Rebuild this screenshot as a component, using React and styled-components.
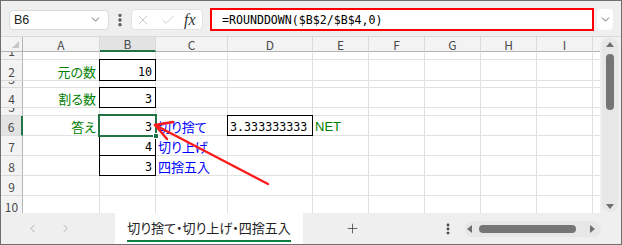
import React from 'react';
import styled, { createGlobalStyle, css } from 'styled-components';
import { ChevronDown, ChevronLeft, ChevronRight, EllipsisVertical, X, Check, Plus } from 'lucide-react';

const GlobalStyle = createGlobalStyle`
  html, body { margin: 0; padding: 0; background: #fff; }
  body { font-family: "Noto Sans CJK JP", "Noto Sans", sans-serif; }
  * { box-sizing: border-box; }
`;

const GREEN = '#217346';
const MONO = '"DejaVu Sans Mono", "Liberation Mono", monospace';
const COLS = ['A', 'B', 'C', 'D', 'E', 'F', 'G', 'H', 'I', 'J'];
const ROWS = [
  { n: 1, h: 8 },
  { n: 2, h: 21 },
  { n: 3, h: 7 },
  { n: 4, h: 20 },
  { n: 5, h: 8 },
  { n: 6, h: 20 },
  { n: 7, h: 20 },
  { n: 8, h: 20 },
  { n: 9, h: 20 },
  { n: 10, h: 20 },
];

const CELLS = {
  A2: { text: '元の数', color: '#008000', align: 'right' },
  B2: { text: '10', align: 'right', mono: true, boxed: true },
  A4: { text: '割る数', color: '#008000', align: 'right' },
  B4: { text: '3', align: 'right', mono: true, boxed: true },
  A6: { text: '答え', color: '#008000', align: 'right' },
  B6: { text: '3', align: 'right', mono: true, boxed: true, selected: true },
  C6: { text: '切り捨て', color: '#0000ff' },
  D6: { text: '3.333333333', mono: true, boxed: true },
  E6: { text: 'NET', color: '#008000', latin: true },
  B7: { text: '4', align: 'right', mono: true, boxed: true },
  C7: { text: '切り上げ', color: '#0000ff' },
  B8: { text: '3', align: 'right', mono: true, boxed: true },
  C8: { text: '四捨五入', color: '#0000ff' },
};

const Frame = styled.div`
  width: 622px;
  height: 245px;
  border: 1px solid #6f6f6f;
  background: #efefef;
  display: flex;
  flex-direction: column;
  overflow: hidden;
`;

const Toolbar = styled.div`
  height: 36px;
  flex: none;
  display: flex;
  align-items: center;
  padding: 2px 0 0 8px;
  border-bottom: 1px solid #d9d9d9;
`;

const NameBox = styled.div`
  width: 100px;
  height: 20px;
  background: #fff;
  border: 1px solid #dadada;
  border-radius: 4px;
  padding: 0 6px 0 4px;
  display: flex;
  align-items: center;
  justify-content: space-between;
  font-family: "Liberation Sans", sans-serif;
  font-size: 12.5px;
  color: #222;
`;

const Divider = styled.div`
  width: 22px;
  display: flex;
  justify-content: center;
  color: #505050;
`;

const FxBox = styled.div`
  width: 72px;
  height: 21px;
  background: #fff;
  border: 1px solid #e2e2e2;
  border-radius: 4px;
  display: flex;
  align-items: center;
  padding-left: 3px;
  gap: 9px;
  color: #c4c4c4;
`;

const Fx = styled.span`
  font-family: "Liberation Serif", serif;
  font-style: italic;
  font-size: 16px;
  color: #333;
  margin-left: -1px;
`;

const FormulaBox = styled.div`
  margin-left: 7px;
  width: 384px;
  height: 23px;
  border: 2px solid #ff0000;
  background: #fff;
  padding-left: 10px;
  display: flex;
  align-items: center;
  font-family: ${MONO};
  font-size: 11.6px;
  color: #000;
`;

const ExpandButton = styled.div`
  margin-left: 3px;
  width: 16px;
  height: 21px;
  background: #fff;
  border-radius: 4px;
  display: flex;
  align-items: center;
  justify-content: center;
  color: #555;
`;

const SheetArea = styled.div`
  flex: 1;
  display: flex;
  min-height: 0;
`;

const GridWrap = styled.div`
  position: relative;
  width: 599px;
  overflow: hidden;
  background: #fff;
`;

const Grid = styled.div`
  display: grid;
  grid-template-columns: 22px 77px 56px 72px 85px 56px 56px 56px 56px 56px 40px;
  grid-template-rows: 15px ${ROWS.map((r) => r.h + 'px').join(' ')};
`;

const HeadBase = css`
  background: #f3f3f3;
  color: #4a4a4a;
  font-size: 12px;
  display: flex;
  justify-content: center;
`;

const Corner = styled.div`
  ${HeadBase};
  position: relative;
  border-right: 1px solid #b4b4b4;
  border-bottom: 1px solid #b4b4b4;
  &::after {
    content: '';
    position: absolute;
    right: 3px;
    bottom: 3px;
    border-left: 7px solid transparent;
    border-bottom: 7px solid #c6c6c6;
  }
`;

const ColHead = styled.div`
  ${HeadBase};
  align-items: center;
  line-height: 13px;
  border-right: 1px solid #dadada;
  border-bottom: ${({ $active }) => ($active ? `2px solid ${GREEN}` : '1px solid #b4b4b4')};
  background: ${({ $active }) => ($active ? '#e3e3e3' : '#f3f3f3')};
`;

const RowHead = styled.div`
  ${HeadBase};
  overflow: hidden;
  align-items: flex-end;
  line-height: 16px;
  border-bottom: 1px solid #dadada;
  border-right: ${({ $active }) => ($active ? `2px solid ${GREEN}` : '1px solid #b4b4b4')};
  background: ${({ $active }) => ($active ? '#e3e3e3' : '#f3f3f3')};
`;

const Cell = styled.div`
  position: relative;
  display: flex;
  align-items: flex-end;
  justify-content: ${({ $align }) => ($align === 'right' ? 'flex-end' : 'flex-start')};
  padding: ${({ $align }) => ($align === 'right' ? '0 3px 0 0' : '0 0 0 2px')};
  border-right: 1px solid #e1e1e1;
  border-bottom: 1px solid #e1e1e1;
  color: ${({ $color }) => $color || '#000'};
  font-family: ${({ $mono, $latin }) =>
    $mono ? MONO : $latin ? '"Liberation Sans", sans-serif' : '"Noto Sans CJK JP", sans-serif'};
  font-size: ${({ $mono }) => ($mono ? '11.7px' : '13px')};
  font-feature-settings: "palt";
  line-height: 16px;
  white-space: nowrap;
  z-index: ${({ $selected }) => ($selected ? 2 : 'auto')};

  ${({ $boxed }) =>
    $boxed &&
    css`
      &::after {
        content: '';
        position: absolute;
        top: -1px;
        left: -1px;
        right: -1px;
        bottom: -1px;
        border: 1px solid #000;
      }
    `}

  ${({ $selected }) =>
    $selected &&
    css`
      &::before {
        content: '';
        position: absolute;
        top: -2px;
        left: -2px;
        right: -2px;
        bottom: -2px;
        border: 2px solid ${GREEN};
        z-index: 1;
      }
    `}
`;

const FillHandle = styled.span`
  position: absolute;
  right: -4px;
  bottom: -4px;
  width: 6px;
  height: 6px;
  background: ${GREEN};
  border: 1px solid #fff;
  z-index: 3;
`;

const Overlay = styled.svg`
  position: absolute;
  left: 0;
  top: 0;
  z-index: 5;
  pointer-events: none;
`;

const VScroll = styled.div`
  width: 21px;
  padding: 1px 3px 1px 2px;
  display: flex;
`;

const VTrack = styled.div`
  flex: 1;
  background: #e7e7e7;
  border-radius: 8px;
  display: flex;
  flex-direction: column;
  align-items: center;
  padding: 4px 0 3px;
`;

const Tri = styled.span`
  width: 0;
  height: 0;
  ${({ $dir }) =>
    $dir === 'up'
      ? css`border-left: 4px solid transparent; border-right: 4px solid transparent; border-bottom: 5px solid #6f6f6f;`
      : $dir === 'down'
      ? css`border-left: 4px solid transparent; border-right: 4px solid transparent; border-top: 5px solid #6f6f6f;`
      : $dir === 'left'
      ? css`border-top: 4px solid transparent; border-bottom: 4px solid transparent; border-right: 5px solid #6f6f6f;`
      : css`border-top: 4px solid transparent; border-bottom: 4px solid transparent; border-left: 5px solid #6f6f6f;`}
`;

const VThumb = styled.div`
  width: 8px;
  height: 56px;
  margin-top: 7px;
  border-radius: 4px;
  background: #757575;
`;

const Spacer = styled.div`
  flex: 1;
`;

const TabBar = styled.div`
  height: 31px;
  flex: none;
  display: flex;
  align-items: center;
  background: #efefef;
`;

const NavArrows = styled.div`
  width: 114px;
  padding-left: 25px;
  display: flex;
  gap: 20px;
  color: #a3a3a3;
`;

const SheetTab = styled.div`
  align-self: stretch;
  width: 188px;
  margin-top: -1px;
  background: #fff;
  border-radius: 4px 4px 0 0;
  display: flex;
  align-items: flex-end;
  justify-content: center;
  padding-bottom: 2px;
`;

const TabLabel = styled.span`
  font-size: 13px;
  font-feature-settings: "palt";
  line-height: 18px;
  color: #222;
  padding-bottom: 3px;
  border-bottom: 2px solid #107c41;
`;

const AddSheet = styled.div`
  width: 98px;
  display: flex;
  justify-content: center;
  color: #444;
`;

const TabDots = styled.div`
  margin-left: 40px;
  width: 14px;
  display: flex;
  justify-content: center;
  color: #444;
`;

const HScroll = styled.div`
  margin-left: 10px;
  width: 136px;
  height: 16px;
  background: #e7e7e7;
  border-radius: 8px;
  display: flex;
  align-items: center;
  padding: 0 4px 0 2px;
`;

const HThumb = styled.div`
  width: 97px;
  height: 8px;
  margin: 0 14px 0 7px;
  border-radius: 4px;
  background: #757575;
`;

export default function App() {
  return (
    <>
      <GlobalStyle />
      <Frame>
        <Toolbar>
          <NameBox>
            <span>B6</span>
            <ChevronDown size={13} color="#555" strokeWidth={1.6} />
          </NameBox>
          <Divider>
            <EllipsisVertical size={16} strokeWidth={3} />
          </Divider>
          <FxBox>
            <X size={16} strokeWidth={1.3} />
            <Check size={16} strokeWidth={1.3} />
            <Fx>fx</Fx>
          </FxBox>
          <FormulaBox>=ROUNDDOWN($B$2/$B$4,0)</FormulaBox>
          <ExpandButton>
            <ChevronDown size={13} strokeWidth={1.6} />
          </ExpandButton>
        </Toolbar>

        <SheetArea>
          <GridWrap>
            <Grid>
              <Corner />
              {COLS.map((c) => (
                <ColHead key={c} $active={c === 'B'}>
                  {c}
                </ColHead>
              ))}
              {ROWS.map((r) => (
                <React.Fragment key={r.n}>
                  <RowHead $active={r.n === 6}>{r.n}</RowHead>
                  {COLS.map((c) => {
                    const d = CELLS[c + r.n] || {};
                    return (
                      <Cell
                        key={c + r.n}
                        $align={d.align}
                        $color={d.color}
                        $mono={d.mono}
                        $latin={d.latin}
                        $boxed={d.boxed}
                        $selected={d.selected}
                      >
                        {d.text}
                        {d.selected && <FillHandle />}
                      </Cell>
                    );
                  })}
                </React.Fragment>
              ))}
            </Grid>
            <Overlay width="599" height="176" viewBox="0 0 599 176">
              <g stroke="#ff1a1a" strokeWidth="2.4" strokeLinecap="round" fill="none">
                <line x1="267" y1="147" x2="154" y2="88" />
                <line x1="154" y1="88" x2="172" y2="85" />
                <line x1="154" y1="88" x2="166" y2="102" />
              </g>
            </Overlay>
          </GridWrap>
          <VScroll>
            <VTrack>
              <Tri $dir="up" />
              <VThumb />
              <Spacer />
              <Tri $dir="down" />
            </VTrack>
          </VScroll>
        </SheetArea>

        <TabBar>
          <NavArrows>
            <ChevronLeft size={13} strokeWidth={1.5} />
            <ChevronRight size={13} strokeWidth={1.5} />
          </NavArrows>
          <SheetTab>
            <TabLabel>切り捨て・切り上げ・四捨五入</TabLabel>
          </SheetTab>
          <AddSheet>
            <Plus size={15} strokeWidth={1.3} />
          </AddSheet>
          <TabDots>
            <EllipsisVertical size={16} strokeWidth={3} />
          </TabDots>
          <HScroll>
            <Tri $dir="left" />
            <HThumb />
            <Tri $dir="right" />
          </HScroll>
        </TabBar>
      </Frame>
    </>
  );
}
